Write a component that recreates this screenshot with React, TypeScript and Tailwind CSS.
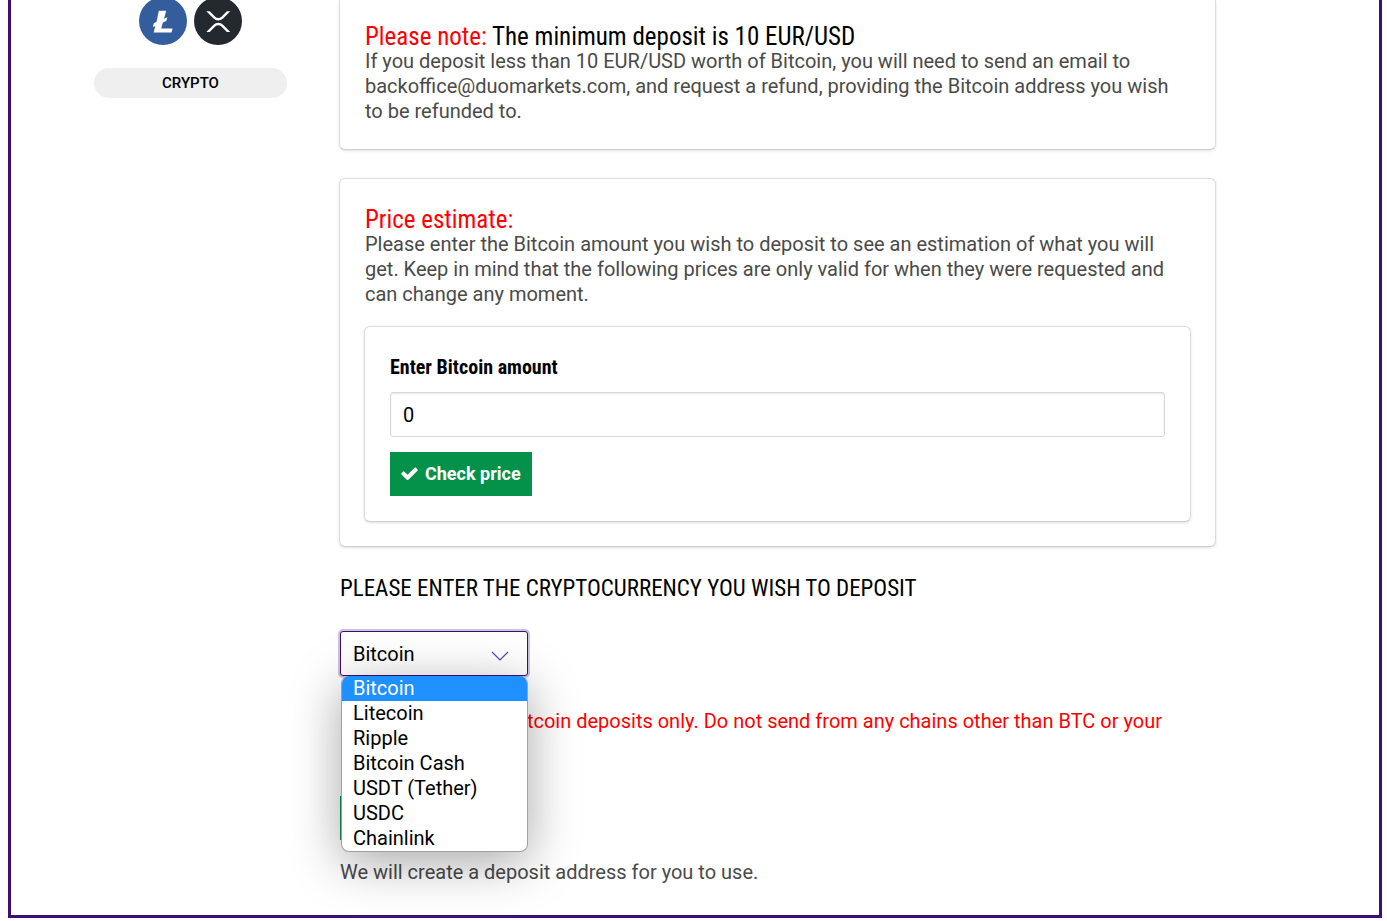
import { useState } from 'react';

const COINS = ['Bitcoin', 'Litecoin', 'Ripple', 'Bitcoin Cash', 'USDT (Tether)', 'USDC', 'Chainlink'];

const condensed = "font-['Roboto_Condensed','Liberation_Sans_Narrow',Roboto,sans-serif]";
const card = 'border border-[#dcdcdc] border-b-[#cfcfcf] bg-white px-[25px] shadow-[0_1px_3px_rgba(0,0,0,0.12)]';

function LitecoinLogo() {
  return (
    <svg viewBox="0 0 48 48" className="size-12" aria-label="Litecoin" role="img">
      <circle cx="24" cy="24" r="24" fill="#345d9d" />
      <path
        fill="#fff"
        d="M19.8 13.8h7.4l-2.2 7.9 3.4-1.4-1.1 3.8-3.4 1.4-1.7 6.1h11.4l-1.1 4H14.6l1.8-6.6-2.6 1 1.1-3.9 2.6-1z"
      />
    </svg>
  );
}

function XrpLogo() {
  return (
    <svg viewBox="0 0 48 48" className="size-12" aria-label="XRP" role="img">
      <circle cx="24" cy="24" r="24" fill="#23292f" />
      <path
        fill="#fff"
        d="M12.3 14.3h3.4l5.5 5.4c1.7 1.7 4.5 1.7 6.2 0l5.5-5.4h3.4l-7.2 7.1a6.8 6.8 0 0 1-9.6 0zM12.3 35h3.4l5.5-5.5c1.7-1.7 4.5-1.7 6.2 0l5.5 5.5h3.4l-7.2-7.2a6.8 6.8 0 0 0-9.6 0z"
      />
    </svg>
  );
}

function CheckIcon() {
  return (
    <svg viewBox="0 0 1792 1792" className="size-[19px]" fill="currentColor" aria-hidden="true">
      <path d="M1671 470q0 40-28 68l-724 724-136 136q-28 28-68 28t-68-28l-136-136-362-362q-28-28-28-68t28-68l136-136q28-28 68-28t68 28l294 295 656-657q28-28 68-28t68 28l136 136q28 28 28 68z" />
    </svg>
  );
}

export default function App() {
  const [amount, setAmount] = useState('0');
  const [coin, setCoin] = useState('Bitcoin');
  const [open, setOpen] = useState(true);

  return (
    <div className="ml-2 mr-[5px] flex overflow-hidden border-x-[3px] border-b-[3px] border-[#3c0f72] bg-white pb-[30px] pl-[83px] pr-[163px] font-[Roboto,sans-serif] text-xl leading-[25px] text-[#4a4a4a]">
      {/* Payment methods */}
      <aside className="w-[193px] shrink-0">
        <div className="-mt-[3px] flex justify-center gap-[7px]">
          <LitecoinLogo />
          <XrpLogo />
        </div>
        <button
          type="button"
          className="mt-[23px] h-[30px] w-full rounded-full bg-[#efefef] text-[15px] font-medium text-black"
        >
          CRYPTO
        </button>
      </aside>

      <main className="ml-[52px] min-w-0 flex-1">
        <section className={`${card} rounded-b-md border-t-0 pb-[25px] pt-6`}>
          <h2 className={`${condensed} text-[25px] leading-[25px] text-black`}>
            <span className="text-[#f00]">Please note:</span> The minimum deposit is 10 EUR/USD
          </h2>
          <p>
            If you deposit less than 10 EUR/USD worth of Bitcoin, you will need to send an email to
            backoffice@duomarkets.com, and request a refund, providing the Bitcoin address you wish to be
            refunded to.
          </p>
        </section>

        {/* Price estimate */}
        <section className={`${card} mt-7 rounded-md pb-6 pt-7`}>
          <h2 className={`${condensed} text-[25px] leading-[25px] text-[#f00]`}>Price estimate:</h2>
          <p>
            Please enter the Bitcoin amount you wish to deposit to see an estimation of what you will get. Keep
            in mind that the following prices are only valid for when they were requested and can change any
            moment.
          </p>
          <form
            onSubmit={(e) => e.preventDefault()}
            className={`${card} mt-[19px] -mx-px rounded-md pb-[25px] pt-7`}
          >
            <label htmlFor="amount" className={`${condensed} block font-bold text-black`}>
              Enter Bitcoin amount
            </label>
            <input
              id="amount"
              type="text"
              value={amount}
              onChange={(e) => setAmount(e.target.value)}
              className="mt-3 block h-[45px] w-full rounded-[3px] border border-[#d8d8d8] px-3 text-black shadow-[inset_0_1px_2px_rgba(0,0,0,0.1)] focus:outline-none"
            />
            <button
              type="submit"
              className="mt-[15px] flex h-11 items-center gap-1.5 bg-[#049149] pl-2.5 pr-[11px] text-lg font-bold text-white"
            >
              <CheckIcon />
              Check price
            </button>
          </form>
        </section>

        {/* Coin selection */}
        <div className="pl-px">
          <label htmlFor="coin" className={`${condensed} mt-7 block text-[23px] leading-[27px] text-black`}>
            PLEASE ENTER THE CRYPTOCURRENCY YOU WISH TO DEPOSIT
          </label>
          <div className="relative mt-[29px] w-[188px]">
            <select
              id="coin"
              value={coin}
              onMouseDown={(e) => {
                e.preventDefault();
                setOpen(!open);
              }}
              onChange={(e) => setCoin(e.target.value)}
              className="block h-[45px] w-full appearance-none rounded-[3px] border border-[#3c0f72] bg-white px-3 pt-0.5 text-black shadow-[0_0_0_2px_#cfc3dc] outline-none"
            >
              {COINS.map((c) => (
                <option key={c}>{c}</option>
              ))}
            </select>
            <svg
              viewBox="0 0 18 10"
              className="pointer-events-none absolute right-[19px] top-5 h-2.5 w-[18px]"
              fill="none"
              stroke="#5b3fc0"
              strokeWidth="1.2"
            >
              <path d="M1 1l8 8 8-8" />
            </svg>
            {open && (
              <ul className="absolute left-px top-full z-10 w-[187px] overflow-hidden rounded-lg border border-t-0 border-[#a0a0a0] bg-white text-black shadow-[0_10px_50px_rgba(0,0,0,0.35)]">
                {COINS.map((c) => (
                  <li key={c}>
                    <button
                      type="button"
                      onClick={() => {
                        setCoin(c);
                        setOpen(false);
                      }}
                      className={
                        c === coin
                          ? 'block w-full bg-[#1e90ff] px-[11px] text-left text-white'
                          : 'block w-full px-[11px] text-left'
                      }
                    >
                      {c}
                    </button>
                  </li>
                ))}
              </ul>
            )}
          </div>
          <p className="mt-[33px] text-[#f00]">
            Please use this for Bitcoin deposits only. Do not send from any chains other than BTC or your
          </p>
          <button
            type="button"
            aria-label="Create address"
            className="mt-[62px] flex h-11 w-40 items-center justify-center bg-[#049149] text-white"
          >
            <CheckIcon />
          </button>
          <p className="mt-5">We will create a deposit address for you to use.</p>
        </div>
      </main>
    </div>
  );
}
